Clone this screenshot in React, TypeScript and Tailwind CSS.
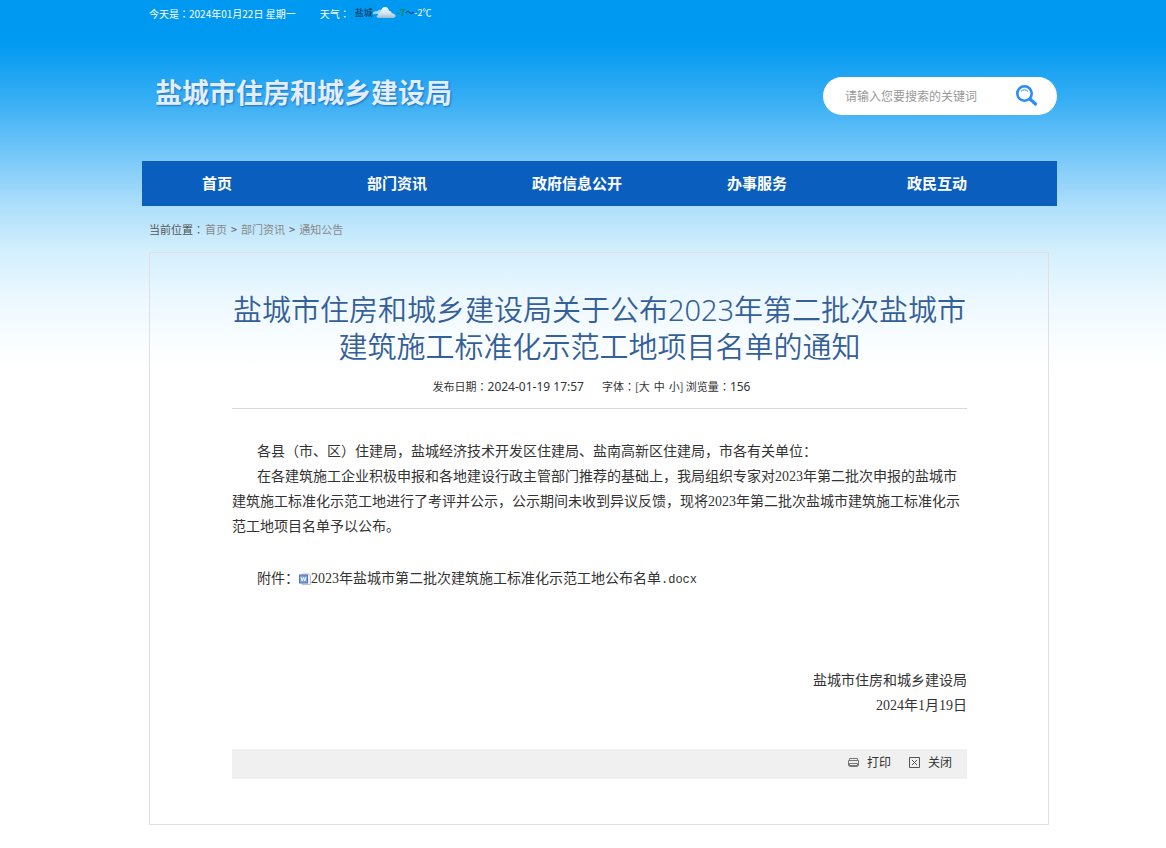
import React from "react";

const navItems = ["首页", "部门资讯", "政府信息公开", "办事服务", "政民互动"];
const crumbs = ["首页", "部门资讯", "通知公告"];

// full-width colon centred in its cell
const Colon = () => (
  <span lang="zh-TW" className="font-['Noto_Sans_CJK_TC',sans-serif]">
    ：
  </span>
);

const Cloud = () => (
  <svg className="h-4 w-6" viewBox="0 0 24 16" aria-hidden="true">
    <defs>
      <linearGradient id="cloud" x1="0" y1="0" x2="0" y2="1">
        <stop offset="0" stopColor="#eef7fd" />
        <stop offset="0.6" stopColor="#d3e3ee" />
        <stop offset="1" stopColor="#9db9cb" />
      </linearGradient>
    </defs>
    <path
      d="M0 8.500c0-1.500 2-2.500 4-2C5 5 6.500 4.500 8 5c2 .5 3 2 3 4H2C1 9.500 0 9.500 0 8.500z"
      fill="#9cd3f5"
    />
    <path
      d="M6 13c-2.500 0-3.200-2.300-.8-3.100-.2-2 1-3 2.300-2.700C8 4 9.500 2 12 2c2.200 0 3.800 1.500 4 3.700 1.800 0 2.600 1 2.600 2.500 4.400.4 5.400 3.800 1.900 4.800z"
      fill="url(#cloud)"
    />
  </svg>
);

const TopBar = () => (
  <div className="flex h-[26px] items-center pl-[7px] text-[10px] text-white">
    <span>
      今天是
      <Colon />
      2024年01月22日 星期一
    </span>
    <span className="ml-6">
      天气
      <Colon />
    </span>
    <span className="ml-[5px] flex items-center text-[9px]">
      <span className="text-[#0b2b45]">盐城</span>
      <Cloud />
      <span className="font-bold text-[#0a8f4a]">-7</span>
      <span className="text-[#0b2b45]">～</span>
      <span>-2℃</span>
    </span>
  </div>
);

const SearchBox = () => (
  <form className="flex h-[38px] w-[234px] items-center rounded-full bg-white pr-[18px] pl-[22px]">
    <input
      type="text"
      aria-label="搜索"
      placeholder="请输入您要搜索的关键词"
      className="min-w-0 flex-1 bg-transparent text-xs text-gray-700 outline-none placeholder:text-[#999]"
    />
    <button type="button" aria-label="搜索">
      <svg className="size-6" viewBox="0 0 24 24" fill="none" stroke="#2b8cf8">
        <circle cx="9.500" cy="9.500" r="7.200" strokeWidth="2.600" />
        <path d="M6 7.500a4.500 4.500 0 0 1 7 0" strokeWidth="1" />
        <path d="M15 15l5.500 5" strokeWidth="3.200" strokeLinecap="round" />
      </svg>
    </button>
  </form>
);

const App = () => {
  return (
    <div
      lang="zh-CN"
      className="min-h-screen bg-white bg-[linear-gradient(to_bottom,#0099f1_0px,#0099f1_42px,#37aef4_100px,#70c5f8_150px,#a8dcfb_200px,#d3effd_250px,#edf8ff_300px,#fbfeff_350px,#ffffff_370px)] pb-[23px] pl-[33px] font-['Noto_Sans_CJK_SC',sans-serif] text-[#333]"
    >
      <div className="mx-auto max-w-[915px]">
        <TopBar />
        <header className="flex items-start justify-between pt-[51px] pb-[46px]">
          <h1 className="pl-[13px] text-[27px] leading-[30px] font-bold text-[#e2edfd] [text-shadow:1px_1px_2px_#1c6fc4]">
            盐城市住房和城乡建设局
          </h1>
          <SearchBox />
        </header>
        <nav className="grid h-[45px] grid-cols-5 items-center gap-[30px] bg-[#0a5ebe] pr-[45px] text-center text-[15px] font-bold text-white">
          {navItems.map((item) => (
            <a key={item} href="#">
              {item}
            </a>
          ))}
        </nav>
        <div className="flex h-[46px] items-center gap-1 pl-[7px] text-[11px] text-[#555]">
          <span className="-mr-[3px]">
            当前位置
            <Colon />
          </span>
          {crumbs.map((item, i) => (
            <React.Fragment key={item}>
              {i > 0 && <span>&gt;</span>}
              <a href="#" className="text-[#888]">
                {item}
              </a>
            </React.Fragment>
          ))}
        </div>

        <main className="mr-2 ml-[7px] border border-[#e0e0e0] pt-[38px] pr-[81px] pb-[45px] pl-[82px]">
          <h2 className="text-center font-['Noto_Sans','Noto_Sans_CJK_SC',sans-serif] text-[29px] leading-[37px] font-[350] text-[#355f98]">
            盐城市住房和城乡建设局关于公布2023年第二批次盐城市
            <br />
            建筑施工标准化示范工地项目名单的通知
          </h2>
          <div className="flex h-11 items-center justify-center border-b border-[#d9d9d9] pr-4 text-[11px]">
            <span>
              发布日期
              <Colon />
            </span>
            <span className="font-['Noto_Sans',sans-serif] text-xs">2024-01-19 17:57</span>
            <span className="ml-[18px]">
              字体
              <Colon />[
            </span>
            <span className="flex gap-1">
              <button type="button">大</button>
              <button type="button">中</button>
              <button type="button">小</button>
            </span>
            <span>
              ]&nbsp;浏览量
              <Colon />
            </span>
            <span className="font-['Noto_Sans',sans-serif] text-xs">156</span>
          </div>

          <article className="pt-[30px] font-['Liberation_Serif','Noto_Sans_CJK_SC',serif] text-sm leading-[25px]">
            <p className="indent-[25px]">
              各县（市、区）住建局，盐城经济技术开发区住建局、盐南高新区住建局，市各有关单位：
            </p>
            <p className="indent-[25px]">
              在各建筑施工企业积极申报和各地建设行政主管部门推荐的基础上，我局组织专家对2023年第二批次申报的盐城市建筑施工标准化示范工地进行了考评并公示，公示期间未收到异议反馈，现将2023年第二批次盐城市建筑施工标准化示范工地项目名单予以公布。
            </p>
            <p className="mt-[27px] flex items-center pl-[25px]">
              附件：
              <a href="#" className="flex items-center">
                <svg className="h-3 w-3" viewBox="0 0 12 12" aria-hidden="true">
                  <path d="M3 1h7l1.500 1.500V11.500H3z" fill="#f1f1ee" stroke="#c4c4c0" />
                  <rect x="0.500" y="2" width="8" height="8" fill="#7d9fe0" stroke="#4f74c6" />
                  <path d="M2 4l1.200 4 1.300-3.500L5.800 8 7 4" fill="none" stroke="#fff" />
                </svg>
                <span>
                  2023年盐城市第二批次建筑施工标准化示范工地公布名单
                  <span className="font-['Liberation_Mono',monospace] text-xs">.docx</span>
                </span>
              </a>
            </p>
            <div className="mt-[77px] text-right">
              <p>盐城市住房和城乡建设局</p>
              <p>2024年1月19日</p>
            </div>
          </article>

          <div className="mt-[31px] flex h-[30px] items-center justify-end gap-[18px] bg-[#f0f0f0] pr-[15px] pb-1 text-xs">
            <button type="button" className="flex items-center gap-2">
              <svg className="size-[11px]" viewBox="0 0 11 11" fill="none" stroke="#777">
                <path d="M1.500 3.500v-2h8v2M.5 3.500h10v5H.5zM1.500 6.500h8v3h-8z" />
              </svg>
              打印
            </button>
            <button type="button" className="flex items-center gap-2">
              <svg className="size-[11px]" viewBox="0 0 11 11" fill="none" stroke="#555">
                <path d="M.5 .5h10v10H.5z" />
                <path d="M3 3l5 5M8 3L3 8" />
              </svg>
              关闭
            </button>
          </div>
        </main>
      </div>
    </div>
  );
};

export default App;
